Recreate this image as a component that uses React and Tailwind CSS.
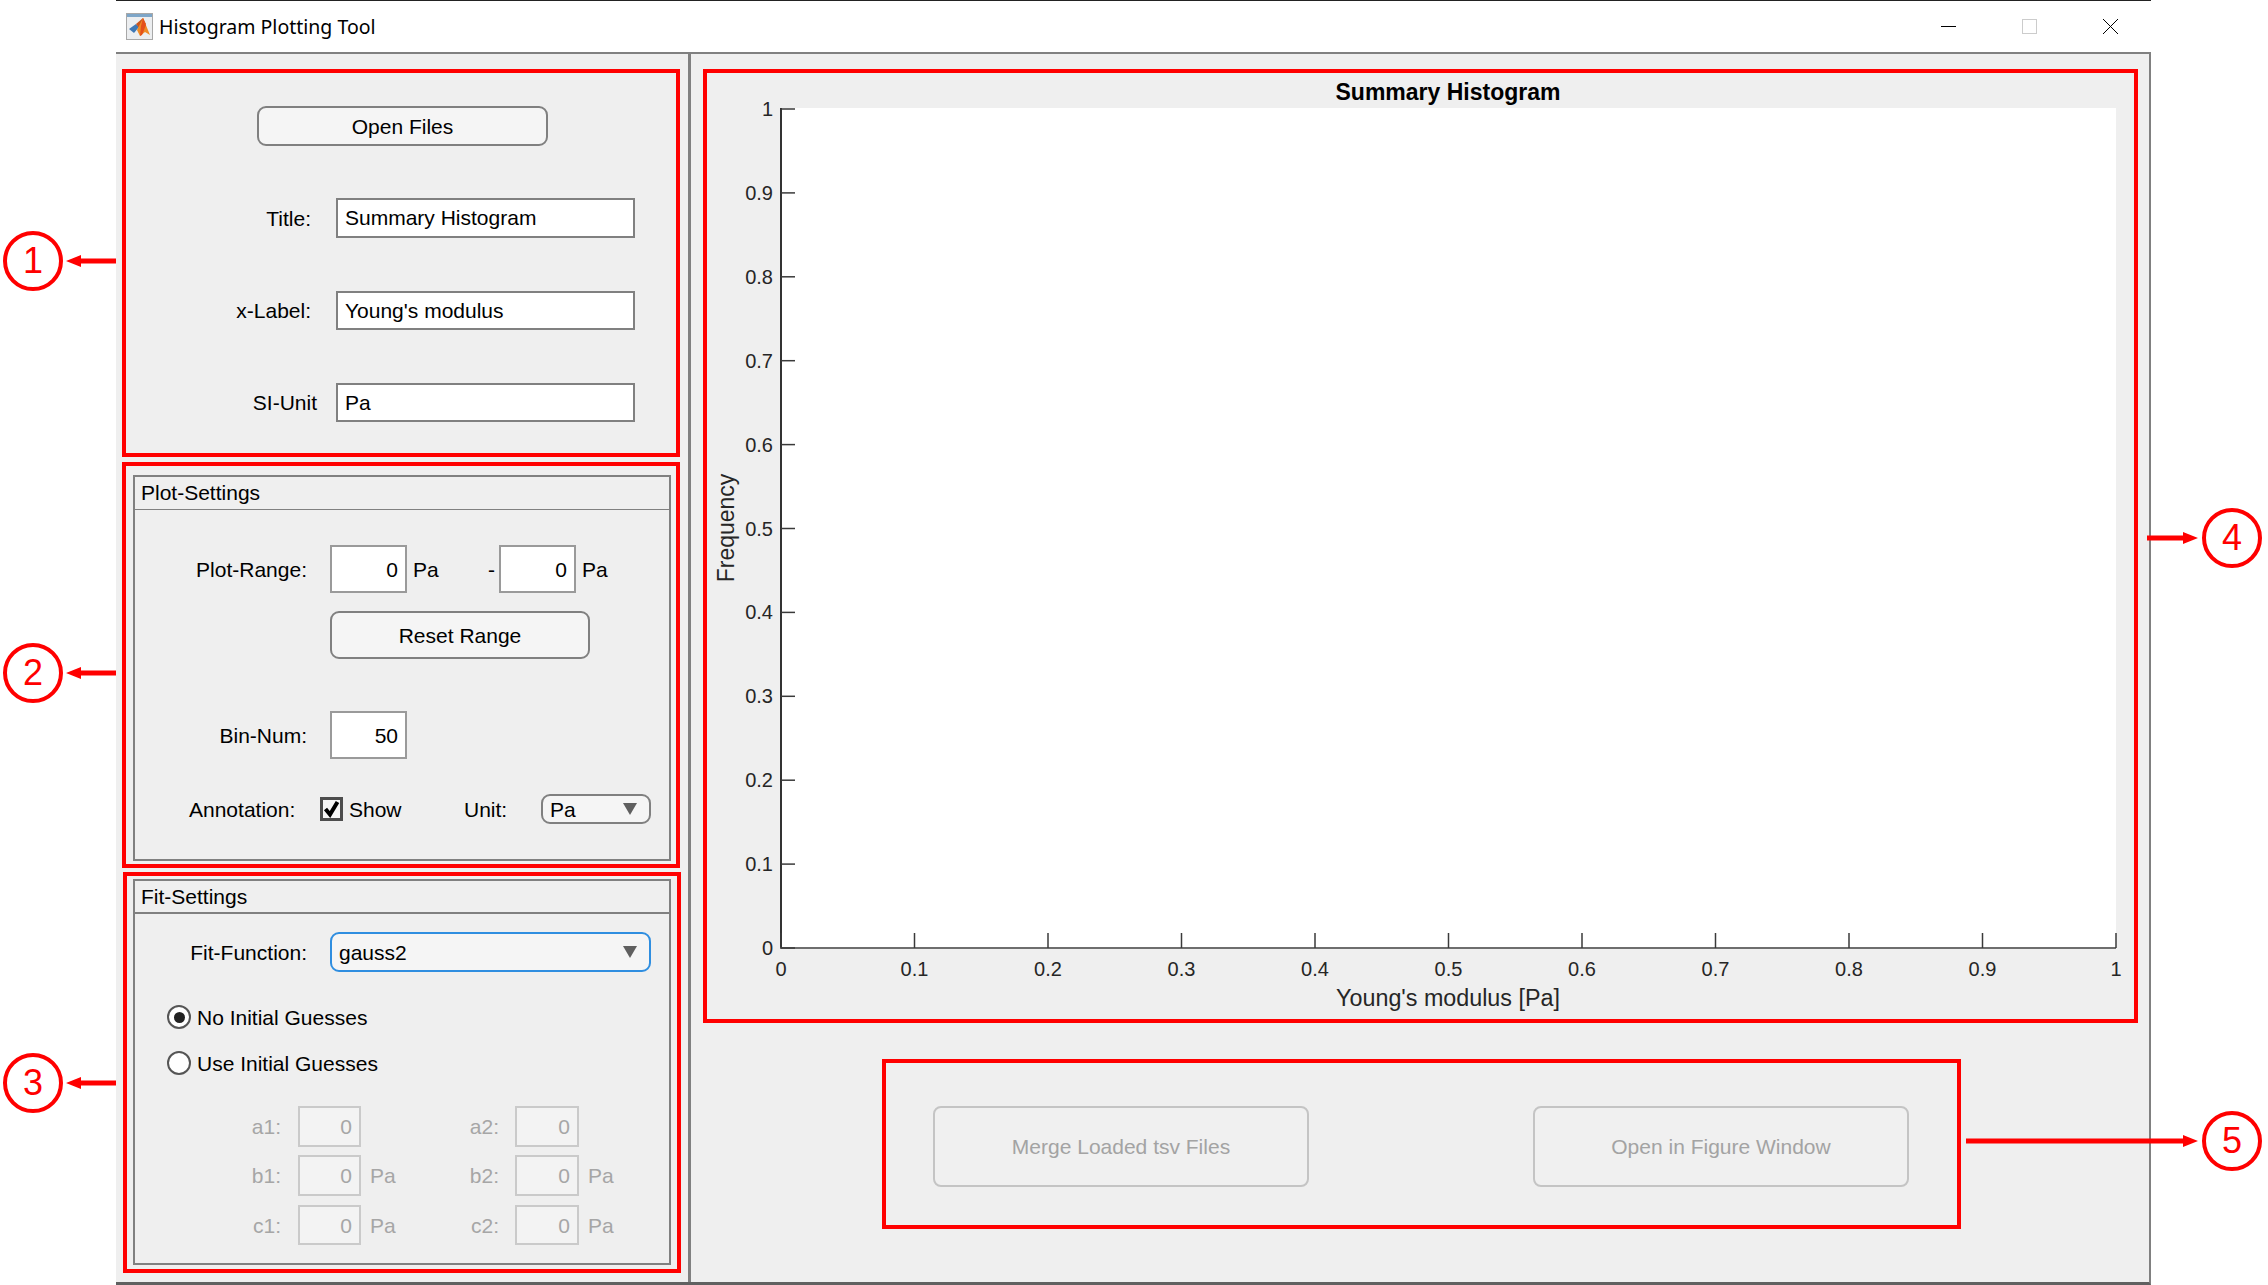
const xTicks = [0, 0.1, 0.2, 0.3, 0.4, 0.5, 0.6, 0.7, 0.8, 0.9, 1];

function Triangle() {
  return (
    <svg width="14" height="12" viewBox="0 0 14 12" className="shrink-0">
      <polygon points="0,0 14,0 7,12" fill="#5f5f5f" />
    </svg>
  );
}

function MatlabIcon() {
  return (
    <svg width="27" height="27" viewBox="0 0 27 27" className="shrink-0">
      <rect x="0.5" y="0.5" width="26" height="26" fill="#eceef0" stroke="#a8a8a8" />
      <rect x="1" y="1" width="25" height="3" fill="#7ea6c8" />
      <polygon points="3,16 10,11 13,14 8,20" fill="#3f78b5" />
      <polygon points="10,11 17,5 20,11 13,15" fill="#c9541c" />
      <polygon points="17,5 24,22 19,19 14,23 11,17" fill="#ef8a26" />
      <polygon points="17,5 20,12 16,22 14,23 15,13" fill="#e4501b" />
    </svg>
  );
}

function WindowControls() {
  return (
    <div className="ml-auto flex items-center gap-[66px] pr-[33px]">
      <svg width="15" height="15" viewBox="0 0 15 15">
        <line x1="0" y1="7.5" x2="15" y2="7.5" stroke="#000" strokeWidth="1" />
      </svg>
      <svg width="15" height="15" viewBox="0 0 15 15">
        <rect x="0.5" y="0.5" width="14" height="14" fill="none" stroke="#cccccc" />
      </svg>
      <svg width="15" height="15" viewBox="0 0 15 15">
        <path d="M0 0 L15 15 M15 0 L0 15" stroke="#000" strokeWidth="1" fill="none" />
      </svg>
    </div>
  );
}

function TextField({ label, value, labelW = "w-[185px]", gap = "ml-[25px]", height = "h-[39px]", className = "" }) {
  return (
    <div className={`flex items-center ${className}`}>
      <span className={`${labelW} text-right`}>{label}</span>
      <div className={`${gap} ${height} flex w-[299px] items-center border-2 border-[#808080] bg-white pl-[7px]`}>
        {value}
      </div>
    </div>
  );
}

function NumberBox({ value, className = "" }) {
  return (
    <div className={`flex h-[48px] w-[77px] shrink-0 items-center justify-end border-2 border-[#9a9a9a] bg-white pr-[7px] ${className}`}>
      {value}
    </div>
  );
}

function PanelHeader({ title, lineClass }) {
  return (
    <div className={`flex h-[33px] items-center pl-[6px] ${lineClass}`}>{title}</div>
  );
}

function GuessRow({ left, right, unit, height = "h-[41px]", className = "" }) {
  return (
    <div className={`flex ${height} items-center text-[#a6a6a6] ${className}`}>
      <span className="w-[146px] text-right">{left}:</span>
      <div className="ml-[17px] flex h-full w-[63px] items-center justify-end border-2 border-[#cacaca] bg-[#f3f3f3] pr-[7px]">0</div>
      <span className="w-[138px] pl-[9px]">{unit && "Pa"}</span>
      <span className="-ml-[40px] w-[40px] text-right">{right}:</span>
      <div className="ml-[16px] flex h-full w-[64px] items-center justify-end border-2 border-[#cacaca] bg-[#f3f3f3] pr-[7px]">0</div>
      <span className="pl-[9px]">{unit && "Pa"}</span>
    </div>
  );
}

function DisabledButton({ label }) {
  return (
    <div className="flex h-[81px] w-[376px] items-center justify-center rounded-[8px] border-2 border-[#c4c4c4] bg-[#f0f0f0] text-[#a3a3a3]">
      {label}
    </div>
  );
}

function Chart() {
  return (
    <svg viewBox="707 73 1427 946" className="block h-full w-full" fill="#262626">
      <rect x="781" y="108" width="1335" height="840" fill="#ffffff" />
      <text x="1448" y="100" textAnchor="middle" fontSize="23" fontWeight="700" fill="#000">Summary Histogram</text>
      <line x1="781" y1="108" x2="781" y2="949" stroke="#333333" strokeWidth="2" />
      <line x1="780" y1="948" x2="2116" y2="948" stroke="#6e6e6e" strokeWidth="2" />
      {xTicks.map((t, i) => {
        const x = 781 + i * 133.5;
        return (
          <g key={t}>
            <line x1={x} y1="933" x2={x} y2="948" stroke="#3a3a3a" strokeWidth="1.5" />
            <text x={x} y="976" textAnchor="middle" fontSize="20">{t}</text>
          </g>
        );
      })}
      {xTicks.map((t, i) => {
        const y = 948 - i * 83.9;
        return (
          <g key={t}>
            <line x1="781" y1={y} x2="795" y2={y} stroke="#3a3a3a" strokeWidth="1.5" />
            <text x="773" y={y + 7} textAnchor="end" fontSize="20">{t}</text>
          </g>
        );
      })}
      <text x="1448" y="1006" textAnchor="middle" fontSize="23.3">Young's modulus [Pa]</text>
      <text transform="translate(734 528) rotate(-90)" textAnchor="middle" fontSize="23">Frequency</text>
    </svg>
  );
}

function CalloutCircle({ n }) {
  return (
    <div className="flex h-[60px] w-[60px] shrink-0 items-center justify-center rounded-[50%] border-[4px] border-[#ff0000] text-[36px] leading-none text-[#ff0000]">
      {n}
    </div>
  );
}

function LeftCallout({ n, className }) {
  return (
    <div className={`absolute left-[3px] flex items-center gap-[3px] ${className}`}>
      <CalloutCircle n={n} />
      <svg width="50" height="12" viewBox="0 0 50 12">
        <polygon points="0,6 15,0 15,3.5 50,3.5 50,8.5 15,8.5 15,12" fill="#ff0000" />
      </svg>
    </div>
  );
}

function RightCallout({ n, width, className }) {
  return (
    <div className={`absolute right-[6px] flex items-center gap-[4px] ${className}`}>
      <svg width={width} height="12" viewBox={`0 0 ${width} 12`}>
        <polygon points={`0,3.5 ${width - 15},3.5 ${width - 15},0 ${width},6 ${width - 15},12 ${width - 15},8.5 0,8.5`} fill="#ff0000" />
      </svg>
      <CalloutCircle n={n} />
    </div>
  );
}

export default function App() {
  return (
    <div className="relative h-[1285px] w-[2268px] overflow-hidden bg-white font-['Liberation_Sans',Arial,sans-serif] text-[21px] leading-none text-black">
      <div className="ml-[116px] flex h-full w-[2035px] flex-col border-t border-[#222222]">
        <div className="flex h-[53px] shrink-0 items-center border-b-2 border-[#808080] pl-[10px]">
          <MatlabIcon />
          <span className="ml-[6px] font-['Noto_Sans',sans-serif] text-[19.5px]">Histogram Plotting Tool</span>
          <WindowControls />
        </div>

        <div className="flex min-h-0 flex-1 border-r-2 border-b-[3px] border-[#808080] border-b-[#606060] bg-[#efefef]">
          <div className="w-[572px] shrink-0 pt-[15px]">
            <div className="ml-[6px] flex h-[388px] w-[558px] flex-col border-[4px] border-[#ff0000] pt-[33px]">
              <div className="ml-[131px] flex h-[40px] w-[291px] items-center justify-center rounded-[9px] border-2 border-[#808080] bg-[#f5f5f5]">
                Open Files
              </div>
              <TextField className="mt-[52px]" height="h-[40px] pb-[1px]" label="Title:" value="Summary Histogram" />
              <TextField className="mt-[53px]" height="h-[39px] pb-[1px]" label="x-Label:" value="Young's modulus" />
              <TextField className="mt-[53px]" label="SI-Unit" labelW="w-[191px]" gap="ml-[19px]" value="Pa" />
            </div>

            <div className="mt-[5px] ml-[6px] h-[406px] w-[558px] border-[4px] border-[#ff0000] pt-[9px] pl-[7px]">
              <div className="h-[386px] w-[538px] border-2 border-[#808080]">
                <PanelHeader title="Plot-Settings" lineClass="border-b border-[#808080] pb-[1px]" />
                <div className="flex items-center pt-[35px]">
                  <span className="w-[172px] text-right">Plot-Range:</span>
                  <NumberBox className="ml-[23px]" value="0" />
                  <span className="w-[81px] pl-[6px]">Pa</span>
                  <span className="w-[11px]">-</span>
                  <NumberBox value="0" />
                  <span className="pl-[6px]">Pa</span>
                </div>
                <div className="mt-[18px] ml-[195px] flex h-[48px] w-[260px] items-center justify-center rounded-[9px] border-2 border-[#808080] bg-[#f5f5f5]">
                  Reset Range
                </div>
                <div className="mt-[52px] flex items-center">
                  <span className="w-[172px] text-right">Bin-Num:</span>
                  <NumberBox className="ml-[23px]" value="50" />
                </div>
                <div className="mt-[35px] flex h-[30px] items-center pl-[54px]">
                  <span className="w-[131px]">Annotation:</span>
                  <div className="flex h-[24px] w-[23px] shrink-0 items-center justify-center border-[3px] border-[#4d4d4d] bg-[#f7f7f7]">
                    <svg width="17" height="18" viewBox="0 0 17 18">
                      <path d="M2.5 9 L7 14.5 L14.5 2" fill="none" stroke="#000" strokeWidth="4" />
                    </svg>
                  </div>
                  <span className="w-[121px] pl-[6px]">Show</span>
                  <span className="w-[77px]">Unit:</span>
                  <div className="flex h-[30px] w-[110px] items-center justify-between rounded-[9px] border-2 border-[#808080] bg-[#f5f5f5] pr-[12px] pl-[7px]">
                    Pa
                    <Triangle />
                  </div>
                </div>
              </div>
            </div>

            <div className="mt-[4px] ml-[7px] h-[401px] w-[558px] border-[4px] border-[#ff0000] pt-[3px] pl-[6px]">
              <div className="h-[386px] w-[538px] border-2 border-[#808080]">
                <PanelHeader title="Fit-Settings" lineClass="border-b-2 border-[#808080]" />
                <div className="flex items-center pt-[18px]">
                  <span className="w-[172px] text-right">Fit-Function:</span>
                  <div className="ml-[23px] flex h-[40px] w-[321px] items-center justify-between rounded-[9px] border-2 border-[#2f8ee0] bg-[#f5f5f5] pr-[12px] pl-[7px]">
                    gauss2
                    <Triangle />
                  </div>
                </div>
                <div className="mt-[33px] flex items-center pl-[32px]">
                  <div className="flex h-[24px] w-[24px] items-center justify-center rounded-full border-2 border-[#555555] bg-white">
                    <div className="h-[11px] w-[11px] rounded-full bg-[#222222]" />
                  </div>
                  <span className="ml-[6px]">No Initial Guesses</span>
                </div>
                <div className="mt-[22px] flex items-center pl-[32px]">
                  <div className="h-[24px] w-[24px] rounded-full border-2 border-[#555555] bg-white" />
                  <span className="ml-[6px]">Use Initial Guesses</span>
                </div>
                <GuessRow className="mt-[31px]" left="a1" right="a2" />
                <GuessRow className="mt-[8px]" left="b1" right="b2" unit />
                <GuessRow className="mt-[9px]" height="h-[40px]" left="c1" right="c2" unit />
              </div>
            </div>
          </div>

          <div className="flex-1 border-l-[3px] border-[#808080] pt-[15px]">
            <div className="ml-[12px] h-[954px] w-[1435px] border-[4px] border-[#ff0000]">
              <Chart />
            </div>
            <div className="mt-[36px] ml-[191px] flex h-[170px] w-[1079px] gap-[224px] border-[4px] border-[#ff0000] pt-[43px] pl-[47px]">
              <DisabledButton label="Merge Loaded tsv Files" />
              <DisabledButton label="Open in Figure Window" />
            </div>
          </div>
        </div>
      </div>

      <LeftCallout n="1" className="top-[231px]" />
      <LeftCallout n="2" className="top-[643px]" />
      <LeftCallout n="3" className="top-[1053px]" />
      <RightCallout n="4" width={51} className="top-[508px]" />
      <RightCallout n="5" width={232} className="top-[1111px]" />
    </div>
  );
}
